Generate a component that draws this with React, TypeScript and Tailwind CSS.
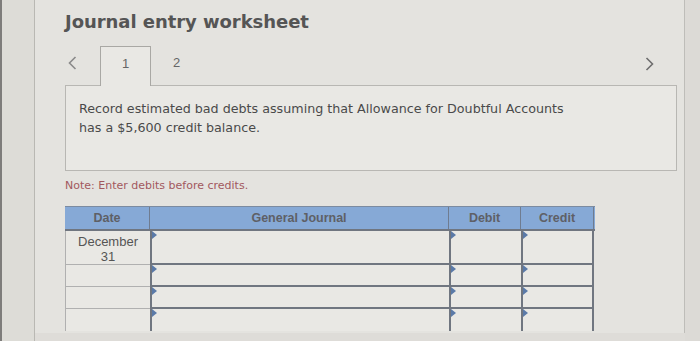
import React from "react";

const Marker = () => (
  <span className="absolute left-0 top-0 w-0 h-0 border-t-[4px] border-b-[4px] border-l-[5px] border-t-transparent border-b-transparent border-l-[#5b7aa8]" />
);

export default function App() {
  const rows = [
    { h: "h-[34px]", date: true, last: false },
    { h: "h-[22px]", date: false, last: false },
    { h: "h-[22px]", date: false, last: false },
    { h: "h-[22px]", date: false, last: true },
  ];
  return (
    <div className="w-[700px] h-[341px] flex overflow-hidden bg-[#dedcd8]" style={{ fontFamily: "'DejaVu Sans', sans-serif" }}>
      <div className="w-[2px] h-full bg-[#7e7d7b]" />
      <div className="w-[33px] h-full bg-[#dddcd7] border-r border-[#b9b8b3]" />
      <div className="w-[650px] h-[333px] bg-[#e4e3df] border-r border-[#bebdb9] flex flex-col pl-[30px] pr-[8px]">
        <h1 className="mt-[9px] h-[26px] text-[18px] font-bold text-[#555555] leading-[26px] tracking-[-0.05px]" style={{ fontFamily: "'DejaVu Sans', Verdana, sans-serif" }}>
          Journal entry worksheet
        </h1>
        <div className="mt-[11px] h-[39px] flex items-stretch relative">
          <div className="w-[35px] flex items-center pl-[3px] pb-[6px]">
            <svg width="9" height="14" viewBox="0 0 9 14"><path d="M7.5 1 L1.5 7 L7.5 13" stroke="#8a8a8a" strokeWidth="1.6" fill="none" /></svg>
          </div>
          <div className="w-[51px] border-t border-l border-r border-[#a9a8a4] bg-[#e9e8e4] flex items-center justify-center pb-[5px] text-[13px] text-[#666] relative z-10 -mb-[1px]" style={{ fontFamily: "'Liberation Sans', Arial, sans-serif" }}>
            1
          </div>
          <div className="w-[51px] flex items-center justify-center pb-[5px] text-[13px] text-[#666]" style={{ fontFamily: "'Liberation Sans', Arial, sans-serif" }}>
            2
          </div>
          <div className="flex-1 flex items-center justify-end pr-[22px] pb-[3px]">
            <svg width="9" height="14" viewBox="0 0 9 14"><path d="M1.5 1 L7.5 7 L1.5 13" stroke="#6e6e6e" strokeWidth="1.6" fill="none" /></svg>
          </div>
        </div>
        <div className="w-[612px] h-[86px] border border-[#b8b7b3] bg-[#e9e8e4] pl-[13px] pt-[13px] text-[12.7px] leading-[19px] text-[#4a4a4a]" style={{ fontFamily: "'DejaVu Sans', Verdana, sans-serif" }}>
          Record estimated bad debts assuming that Allowance for Doubtful Accounts
          <br />
          has a $5,600 credit balance.
        </div>
        <div className="mt-[8px] text-[11px] text-[#a2585e] leading-[14px]" style={{ fontFamily: "'DejaVu Sans', Verdana, sans-serif" }}>
          Note: Enter debits before credits.
        </div>
        <div className="mt-[13px] w-[530px] flex flex-col" style={{ fontFamily: "'Liberation Sans', Arial, sans-serif" }}>
          <div className="flex h-[25px] bg-[#86a9d6] border-t border-[#7c8ba0] border-b-[2px] border-b-[#707680] text-[12.5px] font-bold text-[#5e6066]">
            <div className="w-[85px] flex items-center justify-center border-r border-[#6f7c90]">Date</div>
            <div className="w-[299px] flex items-center justify-center border-r border-[#6f7c90]">General Journal</div>
            <div className="w-[72px] flex items-center justify-center border-r border-[#6f7c90]">Debit</div>
            <div className="w-[73px] flex items-center justify-center border-r border-[#6f7c90]">Credit</div>
          </div>
          {rows.map((r, i) => (
            <div key={i} className={`flex ${r.h}`}>
              <div className={`w-[85px] bg-[#e9e8e4] border-l border-[#b0b0b0] ${r.last ? "" : "border-b"} text-[13px] leading-[15px] text-[#555] text-center pt-[3px]`}>
                {r.date ? (<>December<br />31</>) : null}
              </div>
              <div className={`relative w-[299px] border-l-[2px] border-[#707680] ${r.last ? "" : "border-b-[2px]"} bg-[#e9e8e4]`}>
                <Marker />
              </div>
              <div className={`relative w-[72px] border-l-[2px] border-[#707680] ${r.last ? "" : "border-b-[2px]"} bg-[#e9e8e4]`}>
                <Marker />
              </div>
              <div className={`relative w-[73px] border-l-[2px] border-r-[2px] border-[#707680] ${r.last ? "" : "border-b-[2px]"} bg-[#e9e8e4]`}>
                <Marker />
              </div>
            </div>
          ))}
        </div>
      </div>
      <div className="flex-1 h-full bg-[#dcdad6]" />
    </div>
  );
}
